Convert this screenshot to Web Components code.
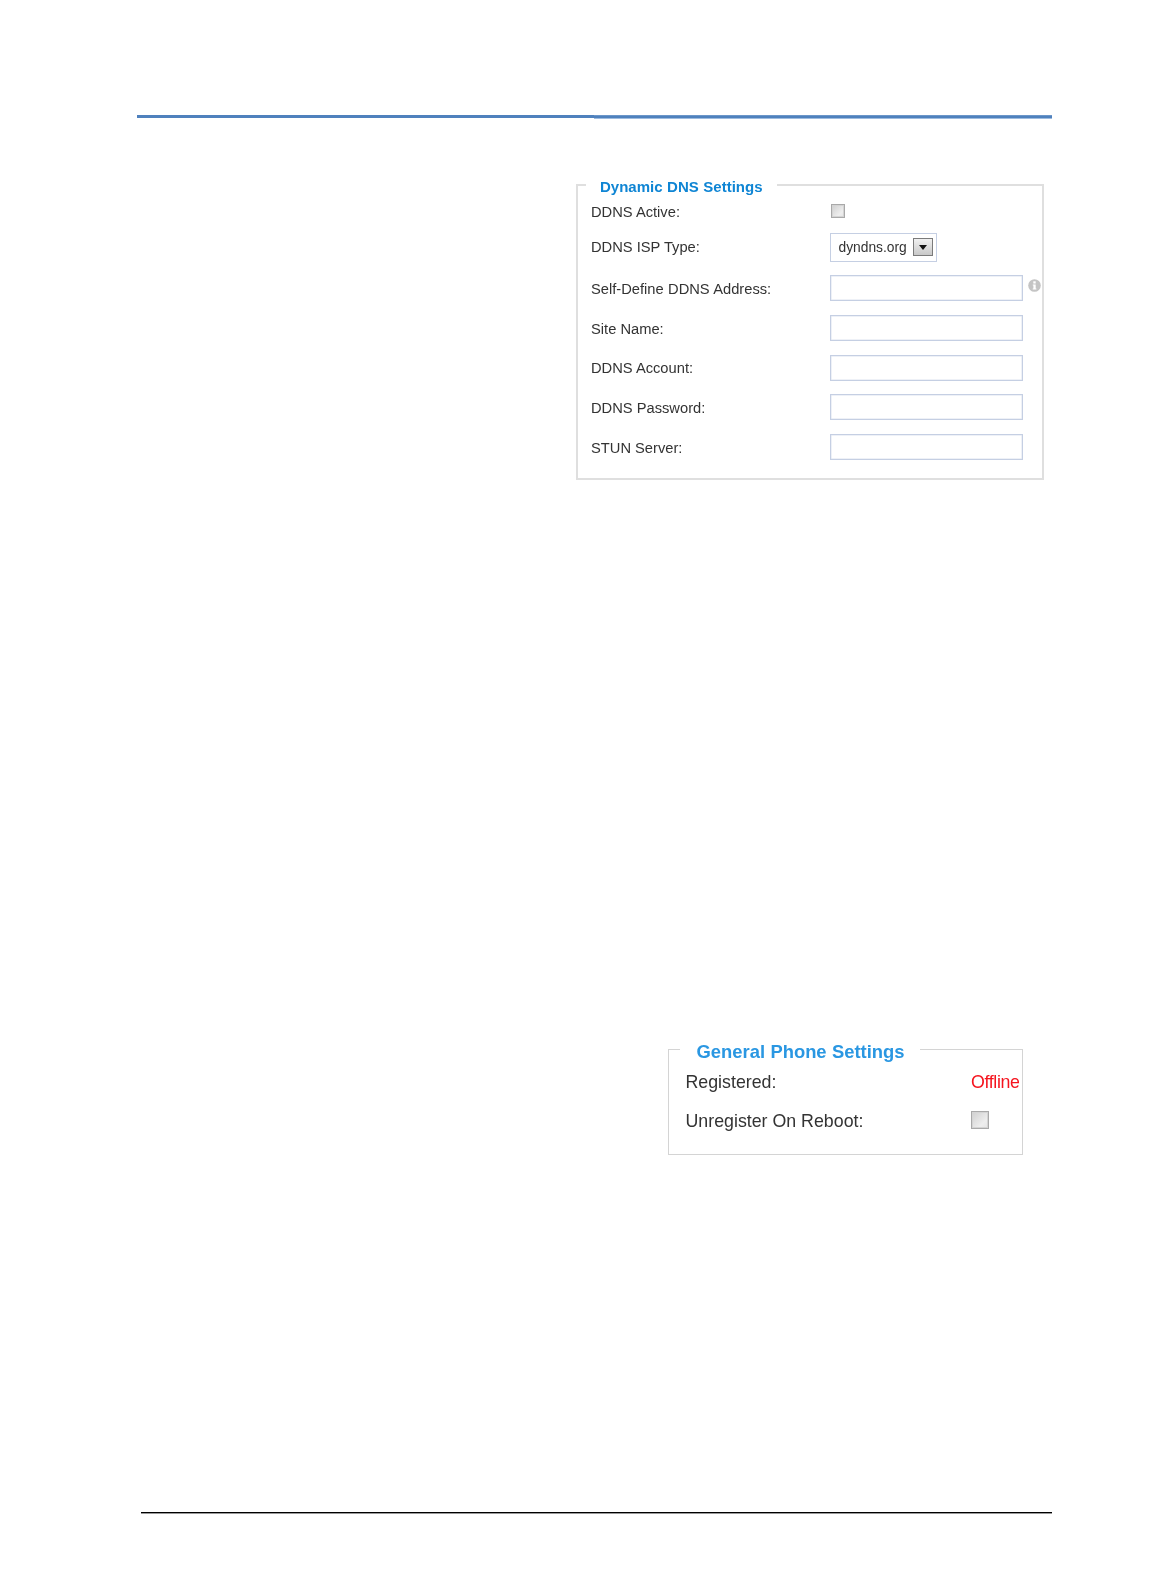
<!DOCTYPE html>
<html><head><meta charset="utf-8"><style>
html,body{margin:0;background:#fff}
body{font-family:"Liberation Sans",Arial,sans-serif;color:#333}
</style></head><body>
<template id="t-page"><style>
:host{display:block;width:1171px;height:1585px;box-sizing:border-box;overflow:hidden;background:#fff}
.top{display:flex;margin:115px 119px 0 137px;height:4px}
.top i{display:block}
.top .a{width:457px;height:3px;background:#4f81bd}
.top .b{flex:1;height:4px;background:#4f81bd;box-shadow:inset 0 1px #6b96c9,inset 0 -1px #9dbbdf}
.one{margin:65px 0 0 576px}
.two{margin:569px 0 0 668px}
.foot{margin:357px 119px 0 141px;height:1px;background:#000;box-shadow:0 1px #999}
</style>
<div class="top"><i class="a"></i><i class="b"></i></div>
<div class="one"><slot name="one"></slot></div>
<div class="two"><slot name="two"></slot></div>
<div class="foot"></div>
</template>

<template id="t-group"><style>
:host{display:block;box-sizing:border-box;position:relative;border:var(--bw,2px) solid var(--bc,#dfdfdf);width:var(--w);height:var(--h);padding:var(--pad)}
.lg{position:absolute;left:var(--lgx);top:var(--lgy);padding:0 var(--lgpr) 0 var(--lgp);background:#fff;font-weight:bold;font-size:var(--lgf);line-height:20px;color:var(--lgc);letter-spacing:var(--lgs);word-spacing:var(--lgw);white-space:nowrap;filter:blur(.3px)}
</style><div class="lg"><slot name="legend"></slot></div><slot></slot></template>

<template id="t-row"><style>
:host{display:grid;grid-template-columns:var(--col) 1fr;align-items:center;height:var(--rh,39.6px);font-size:var(--fs,14.7px);color:#333}
.l{filter:blur(.3px);white-space:nowrap;padding-top:var(--lp,0);word-spacing:var(--lw,0)}
.c{display:flex;align-items:center;min-width:0}
</style><span class="l"><slot name="label"></slot></span><span class="c"><slot></slot></span></template>

<template id="t-input"><style>
:host{display:block;box-sizing:border-box;width:193px;height:26px;margin-top:var(--mt,0);border:1px solid #c5cfe3;box-shadow:inset 0 0 0 .5px #dde3ef;background:#fff;position:relative}
</style><slot></slot></template>

<template id="t-check"><style>
:host{display:block;box-sizing:border-box;width:var(--s,14px);height:var(--s,14px);margin:var(--m,0 0 0 1px);border:1.5px solid #a9a9a9;background:linear-gradient(135deg,#cfcfcf,#eeeeee 70%,#e4e4e4);box-shadow:inset 0 0 0 1px #d4d4d4}
</style></template>

<template id="t-select"><style>
:host{display:flex;align-items:center;box-sizing:border-box;width:107px;height:29px;border:1px solid #c5cfe3;background:#fff;padding-left:7.5px;font-size:13.8px;color:#333}
.v{flex:1;filter:blur(.3px)}
.b{width:20px;height:18px;box-sizing:border-box;margin-right:3px;border:1px solid #7b7b7b;background:linear-gradient(#f0f0f0,#c8c8c8);display:flex;align-items:center;justify-content:center}
svg{width:8px;height:5px;display:block}
</style><span class="v"><slot></slot></span><span class="b"><svg viewBox="0 0 8 5"><path d="M0 0H8L4 5Z" fill="#111"/></svg></span></template>

<template id="t-info"><style>
:host{position:absolute;display:block;width:13px;height:13px;left:197px;top:3px}
svg{display:block;width:13px;height:13px;filter:blur(.3px)}
</style><svg viewBox="0 0 13 13"><circle cx="6.5" cy="6.5" r="6.3" fill="#c4c4c4"/><rect x="5.3" y="2.3" width="2.4" height="2.2" fill="#fff"/><path d="M4.8 5.5H7.7V9.4H8.4V10.6H4.7V9.4H5.4V6.6H4.8Z" fill="#fff"/></svg></template>

<x-page>
<x-group slot="one" style="--w:468px;--h:296px;--pad:9px 0 0 13px;--lgx:8px;--lgy:-9px;--lgp:14px;--lgpr:14px;--lgf:15px;--lgc:#0f85d4;--lgs:0;--lgw:.4px">
  <span slot="legend">Dynamic DNS Settings</span>
  <x-row style="--col:239px;--rh:33px"><span slot="label">DDNS Active:</span><x-check style="--m:0 0 1px 1px"></x-check></x-row>
  <x-row style="--col:239px;--rh:38px"><span slot="label">DDNS ISP Type:</span><x-select>dyndns.org</x-select></x-row>
  <x-row style="--col:239px;--rh:42px;--lw:.3px;--lp:3px;--mt:2px"><span slot="label">Self-Define DDNS Address:</span><x-input><x-info></x-info></x-input></x-row>
  <x-row style="--col:239px;--rh:40px;--lp:2px"><span slot="label">Site Name:</span><x-input></x-input></x-row>
  <x-row style="--col:239px;--rh:39px"><span slot="label">DDNS Account:</span><x-input></x-input></x-row>
  <x-row style="--col:239px;--rh:40px;--lp:2px"><span slot="label">DDNS Password:</span><x-input></x-input></x-row>
  <x-row style="--col:239px;--rh:40px;--lp:2px"><span slot="label">STUN Server:</span><x-input></x-input></x-row>
</x-group>
<x-group slot="two" style="--w:355px;--h:106px;--bw:1.5px;--bc:#d4d4d4;--pad:13px 0 0 16.5px;--lgx:10.5px;--lgy:-8px;--lgp:17px;--lgpr:15px;--lgf:18.4px;--lgc:#2a97e2;--lgs:0;--lgw:.3px">
  <span slot="legend">General Phone Settings</span>
  <x-row style="--col:285.5px;--rh:39px;--fs:17.8px"><span slot="label">Registered:</span><span style="color:#f5141e;white-space:nowrap;filter:blur(.3px);letter-spacing:-.35px">Offline</span></x-row>
  <x-row style="--col:285.5px;--rh:39px;--fs:17.8px"><span slot="label">Unregister On Reboot:</span><x-check style="--s:18px;--m:0 0 3px 0"></x-check></x-row>
</x-group>
</x-page>
<script>
for (const [name,id] of [['x-page','t-page'],['x-group','t-group'],['x-row','t-row'],['x-input','t-input'],['x-check','t-check'],['x-select','t-select'],['x-info','t-info']]) {
  customElements.define(name, class extends HTMLElement {
    constructor(){super();this.attachShadow({mode:'open'}).appendChild(document.getElementById(id).content.cloneNode(true));}
  });
}
</script>
</body></html>
